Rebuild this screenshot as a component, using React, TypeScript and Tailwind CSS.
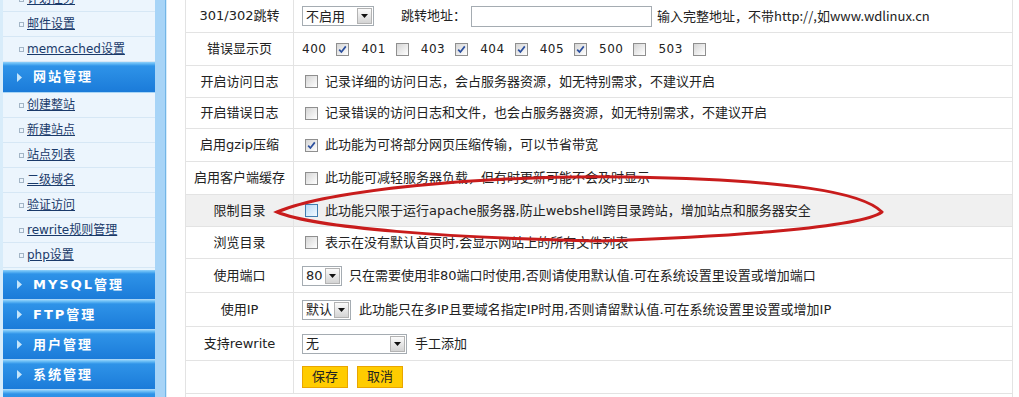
import React from 'react';

const FONT = "font-['DejaVu_Sans','Noto_Sans_CJK_SC',sans-serif]";

function NavItem({ label }: { label: string }) {
  return (
    <div className="h-[25px] shrink-0 flex items-center pl-[16px] border-b border-[#d6e7f5] bg-[#ecf5fd]">
      <span className="w-[5px] h-[5px] border border-[#a3b5c6] mr-[3px] shrink-0" />
      <span className="text-[12px] text-[#1a3a6a] underline leading-none whitespace-nowrap">{label}</span>
    </div>
  );
}

function NavHead({ label, tall }: { label: string; tall?: boolean }) {
  return (
    <div
      className={`${tall ? 'h-[31px]' : 'h-[30px]'} shrink-0 flex items-center pl-[14px] border-b border-[#a8d5f6] bg-[linear-gradient(#8fd1fb_0px,#5ab4f3_2px,#2e93e8_4px,#1b7bd9_100%)]`}
    >
      <svg width="5" height="9" viewBox="0 0 5 9">
        <path d="M0 0 L5 4.5 L0 9 Z" fill="#c4e5fb" />
      </svg>
      <span className="ml-[11px] text-white font-bold text-[13px] tracking-[2px] whitespace-nowrap">{label}</span>
    </div>
  );
}

function Check({ checked, hot }: { checked?: boolean; hot?: boolean }) {
  return (
    <span
      className={
        hot
          ? 'w-[13px] h-[13px] shrink-0 flex items-center justify-center border border-[#3f7db0] bg-[linear-gradient(135deg,#b6daf6,#f2f9ff)]'
          : 'w-[13px] h-[13px] shrink-0 flex items-center justify-center border border-[#8f8f8f] bg-[linear-gradient(135deg,#d5d5d5,#ffffff)]'
      }
    >
      {checked && (
        <svg width="9" height="9" viewBox="0 0 9 9">
          <path d="M1.2 4.6 L3.4 7 L7.8 1.4" stroke="#2b4f9e" strokeWidth="1.7" fill="none" />
        </svg>
      )}
    </span>
  );
}

function Select({ value, w }: { value: string; w: string }) {
  return (
    <div className={`${w} h-[20px] shrink-0 border border-[#a5acb2] bg-white flex items-center justify-between pl-[3px] pr-[1px]`}>
      <span className="leading-none">{value}</span>
      <span className="w-[15px] h-[16px] border border-[#b3b3b3] bg-[linear-gradient(#fbfbfb,#d4d4d4)] flex items-center justify-center">
        <svg width="7" height="4" viewBox="0 0 7 4">
          <path d="M0 0 H7 L3.5 4 Z" fill="#111" />
        </svg>
      </span>
    </div>
  );
}

function Row({ label, h, gray, children }: { label?: string; h: string; gray?: boolean; children: React.ReactNode }) {
  return (
    <div className={`${h} grid grid-cols-[108px_1fr] border-b border-[#e3e3e3] ${gray ? 'bg-[#f0f0f0]' : 'bg-white'}`}>
      <div className="flex items-center justify-center border-r border-[#e3e3e3] whitespace-nowrap">{label}</div>
      <div className="flex items-center pl-[8px] whitespace-nowrap">{children}</div>
    </div>
  );
}

const codes: [string, boolean][] = [
  ['400', true],
  ['401', false],
  ['403', true],
  ['404', true],
  ['405', true],
  ['500', false],
  ['503', false],
];

export default function App() {
  return (
    <div className={`relative w-[1019px] h-[397px] overflow-hidden bg-white flex ${FONT}`}>
      {/* Sidebar */}
      <div className="w-[167px] h-full flex bg-[#d8ecfa] pl-[3px]">
        <div className="w-[152px] flex flex-col -mt-[13px]">
          <NavItem label="计划任务" />
          <NavItem label="邮件设置" />
          <NavItem label="memcached设置" />
          <NavHead label="网站管理" tall />
          <NavItem label="创建整站" />
          <NavItem label="新建站点" />
          <NavItem label="站点列表" />
          <NavItem label="二级域名" />
          <NavItem label="验证访问" />
          <NavItem label="rewrite规则管理" />
          <NavItem label="php设置" />
          <div className="h-[2px] shrink-0 bg-[#eaf5fd]" />
          <NavHead label="MYSQL管理" />
          <NavHead label="FTP管理" />
          <NavHead label="用户管理" />
          <NavHead label="系统管理" />
          <NavHead label="" />
        </div>
        <div className="w-[11px] bg-[#a7d4f7] border-r border-[#72b5e6]" />
      </div>

      {/* Form table */}
      <div className="ml-[18px] w-[828px] h-full border-x border-[#e3e3e3] text-[13px] text-[#222]">
        <Row label="301/302跳转" h="h-[33px]">
          <Select value="不启用" w="w-[72px]" />
          <span className="ml-[27px]">跳转地址：</span>
          <span className="ml-[5px] w-[181px] h-[21px] border border-[#a5acb2] bg-white" />
          <span className="ml-[5px]">
            输入完整地址，不带<span className="font-['Noto_Sans_CJK_SC',sans-serif]">http://,如www.wdlinux.cn</span>
          </span>
        </Row>
        <Row label="错误显示页" h="h-[33px]">
          {codes.map(([c, on]) => (
            <span key={c} className="flex items-center">
              <span className="text-[12px] tracking-[0.5px]">{c}</span>
              <span className="ml-[10px] mr-[12px]">
                <Check checked={on} />
              </span>
            </span>
          ))}
        </Row>
        <Row label="开启访问日志" h="h-[32px]">
          <span className="ml-[3px] mr-[7px]"><Check /></span>
          记录详细的访问日志，会占服务器资源，如无特别需求，不建议开启
        </Row>
        <Row label="开启错误日志" h="h-[31px]">
          <span className="ml-[3px] mr-[7px]"><Check /></span>
          记录错误的访问日志和文件，也会占服务器资源，如无特别需求，不建议开启
        </Row>
        <Row label="启用gzip压缩" h="h-[33px]">
          <span className="ml-[3px] mr-[7px]"><Check checked /></span>
          此功能为可将部分网页压缩传输，可以节省带宽
        </Row>
        <Row label="启用客户端缓存" h="h-[33px]">
          <span className="ml-[3px] mr-[7px]"><Check /></span>
          此功能可减轻服务器负载，但有时更新可能不会及时显示
        </Row>
        <Row label="限制目录" h="h-[32px]" gray>
          <span className="ml-[3px] mr-[7px]"><Check hot /></span>
          此功能只限于运行apache服务器,防止webshell跨目录跨站，增加站点和服务器安全
        </Row>
        <Row label="浏览目录" h="h-[32px]">
          <span className="ml-[3px] mr-[7px]"><Check /></span>
          表示在没有默认首页时,会显示网站上的所有文件列表
        </Row>
        <Row label="使用端口" h="h-[34px]">
          <Select value="80" w="w-[40px]" />
          <span className="ml-[7px]">只在需要使用非80端口时使用,否则请使用默认值.可在系统设置里设置或增加端口</span>
        </Row>
        <Row label="使用IP" h="h-[34px]">
          <Select value="默认" w="w-[49px]" />
          <span className="ml-[8px]">此功能只在多IP且要域名指定IP时用,否则请留默认值.可在系统设置里设置或增加IP</span>
        </Row>
        <Row label="支持rewrite" h="h-[34px]">
          <Select value="无" w="w-[105px]" />
          <span className="ml-[8px]">手工添加</span>
        </Row>
        <Row h="h-[33px]">
          <button className="w-[46px] h-[22px] bg-[#ffcc00] border border-[#e9a600] text-[13px] text-[#222]">保存</button>
          <button className="ml-[9px] w-[46px] h-[22px] bg-[#ffcc00] border border-[#e9a600] text-[13px] text-[#222]">取消</button>
        </Row>
      </div>

      {/* Hand-drawn red annotation */}
      <svg className="absolute inset-0 pointer-events-none" width="1019" height="397" viewBox="0 0 1019 397">
        <path
          d="M882 212 C862 192 790 180 630 177 C480 175 330 190 277 212 C315 228 450 238 600 241 C720 237 860 228 882 212"
          stroke="#c81c1c"
          strokeWidth="3"
          fill="none"
          strokeLinecap="round"
        />
      </svg>
    </div>
  );
}
